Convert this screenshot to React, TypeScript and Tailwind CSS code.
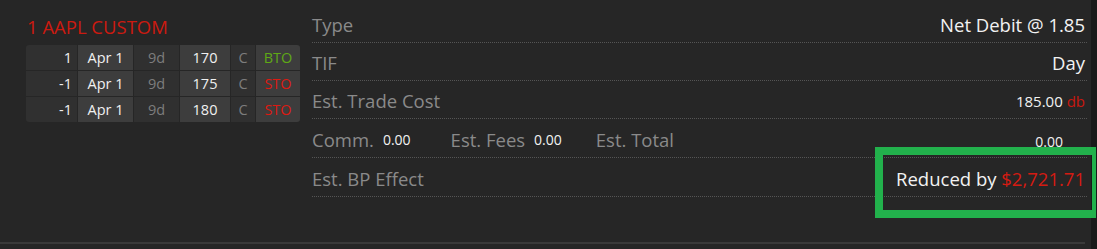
import React from 'react';

const legs = [
  { qty: '1', exp: 'Apr 1', dte: '9d', strike: '170', type: 'C', action: 'BTO' },
  { qty: '-1', exp: 'Apr 1', dte: '9d', strike: '175', type: 'C', action: 'STO' },
  { qty: '-1', exp: 'Apr 1', dte: '9d', strike: '180', type: 'C', action: 'STO' },
];

function Row({ h, children }: { h: string; children: React.ReactNode }) {
  return (
    <div className={`${h} flex items-center justify-between border-b border-dotted border-[#555] pr-[2px] pt-[3px]`}>
      {children}
    </div>
  );
}

export default function App() {
  return (
    <div className="relative w-[1097px] h-[249px] bg-[#262626] flex font-['Open_Sans',sans-serif] overflow-hidden">
      <div className="w-[1091px] flex flex-col">
        <div className="flex flex-1">
          {/* left: order legs */}
          <div className="w-[312px] pl-[26px] pt-[14px]">
            <div className="text-[18.5px] leading-[26px] text-[#cc1a10] pl-px">1 AAPL CUSTOM</div>
            <div className="mt-[5px] w-[274px] flex flex-col gap-px rounded-[3px] overflow-hidden text-[14.5px]">
              {legs.map((l, i) => (
                <div key={i} className="flex gap-px h-[25px] leading-[25px]">
                  <div className="w-[51px] bg-[#303030] text-right pr-[5px] text-[#f0f0f0]">{l.qty}</div>
                  <div className="w-[55px] bg-[#3d3d3d] text-center text-[#f0f0f0]">{l.exp}</div>
                  <div className="w-[45px] bg-[#303030] text-center text-[#7d7d7d]">{l.dte}</div>
                  <div className="w-[50px] bg-[#3d3d3d] text-center text-[#f0f0f0]">{l.strike}</div>
                  <div className="w-[24px] bg-[#303030] text-center text-[#7d7d7d]">{l.type}</div>
                  <div
                    className={`w-[44px] bg-[#3d3d3d] text-center ${l.action === 'BTO' ? 'text-[#5fa816]' : 'text-[#dd1a12]'}`}
                  >
                    {l.action}
                  </div>
                </div>
              ))}
            </div>
          </div>

          {/* right: order summary */}
          <div className="w-[775px] pt-[5px] text-[#8a8a8a] text-[18.5px]">
            <Row h="h-[38px]">
              <span>Type</span>
              <span className="text-[#f2f2f2]">Net Debit @ 1.85</span>
            </Row>
            <Row h="h-[38px]">
              <span>TIF</span>
              <span className="text-[#f2f2f2]">Day</span>
            </Row>
            <Row h="h-[38px]">
              <span>Est. Trade Cost</span>
              <span className="text-[#f2f2f2] text-[15px]">
                185.00 <span className="text-[#c8180f]">db</span>
              </span>
            </Row>
            <Row h="h-[39px]">
              <div className="flex items-center">
                <span>Comm.</span>
                <span className="ml-[9px] text-[14px] text-[#f2f2f2]">0.00</span>
                <span className="ml-[40px]">Est. Fees</span>
                <span className="ml-[9px] text-[14px] text-[#f2f2f2]">0.00</span>
                <span className="ml-[34px]">Est. Total</span>
              </div>
              <span className="text-[14px] text-[#f2f2f2] pr-[22px] pt-[3px]">0.00</span>
            </Row>
            <Row h="h-[39px]">
              <span>Est. BP Effect</span>
              <span className="text-[#f2f2f2]">
                Reduced by <span className="text-[#d41b12]">$2,721.71</span>
              </span>
            </Row>
          </div>
        </div>
        <div className="h-[2px] w-[1085px] bg-[#3a3a3a] mb-[5px]" />
      </div>
      <div className="w-[6px] bg-[#1a1a1a]" />

      {/* highlight annotation */}
      <div className="absolute left-[875px] top-[147px] w-[221px] h-[71px] border-8 border-r-4 border-[#22b14c]" />
    </div>
  );
}
